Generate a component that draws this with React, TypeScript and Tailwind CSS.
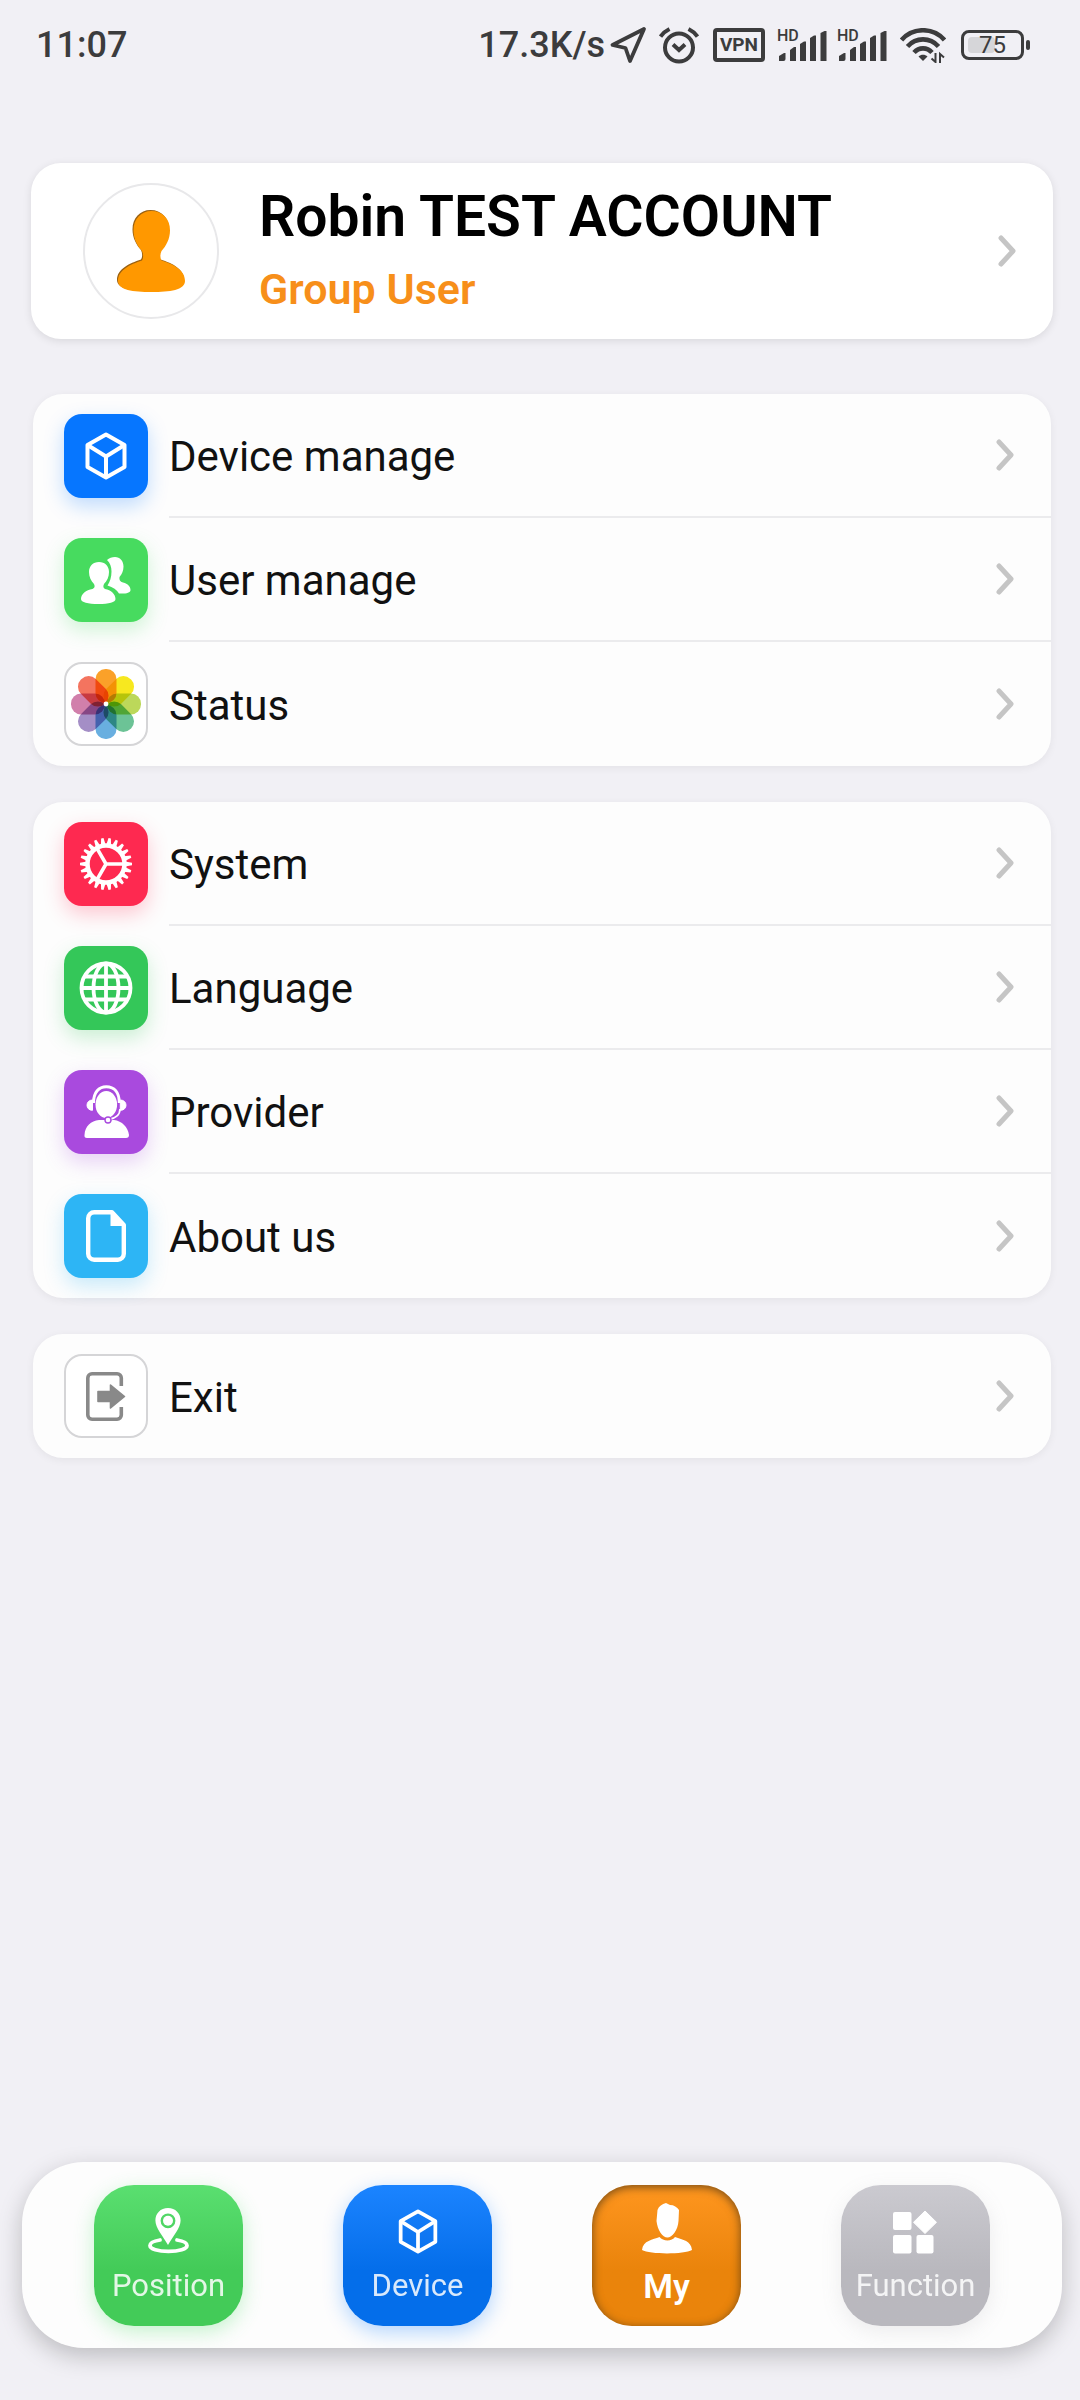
import type { ReactNode } from "react";
import clsx from "clsx";

function Chevron() {
  return (
    <svg width="18" height="32" viewBox="0 0 18 32" fill="none" className="shrink-0 text-[#c5c5c5]">
      <path d="M3 3 L15 16 L3 29" stroke="currentColor" strokeWidth="5" strokeLinecap="round" strokeLinejoin="round" />
    </svg>
  );
}

function BoxIcon({ className }: { className: string }) {
  return (
    <svg viewBox="0 0 42 48" fill="none" stroke="currentColor" strokeWidth="4" strokeLinejoin="round" className={className}>
      <path d="M21 2.5 L39.5 13 V35 L21 45.5 L2.5 35 V13 Z" />
      <path d="M2.5 13 L21 24.5 L39.5 13 M21 24.5 V45" />
    </svg>
  );
}

function UsersIcon() {
  return (
    <svg width="50" height="47" viewBox="0 0 50 47" fill="currentColor">
      <path d="M18 5 C24 5 28 9 28 15 C28 20 26 24 23 27 C22 29 22 31 24 32 C30 33 34.5 37 34.5 42 C34.5 45.5 28 47 17.5 47 C7 47 0 45.5 0 42 C0 37 5 33 11.5 32 C14 31 14 29 13 27 C10 24 8 20 8 15 C8 9 12 5 18 5 Z" />
      <path d="M26 3 C28 1 31 0 34 0 C39 0 42.5 4 42.5 9.5 C42.5 14 41 17 38.5 20 C38 23 39 24.5 42 25.5 C47 27 49.5 29.5 49.5 33 C49.5 36 44 37 38 36.5 C36 33 32 30 26.5 28.5 C29 25 30.5 20 30.5 14.5 C30.5 9.5 29 6 26 3 Z" />
    </svg>
  );
}

const petals = ["#fba129", "#f7e81f", "#bcd85a", "#6cc396", "#69afe0", "#a48ec6", "#d17fab", "#f4745f"];

function FlowerIcon() {
  return (
    <svg width="72" height="72" viewBox="-36 -36 72 72" className="isolate">
      {petals.map((color, i) => (
        <rect
          key={color}
          x="-10.5"
          y="-35"
          width="21"
          height="34"
          rx="10"
          fill={color}
          transform={`rotate(${i * 45})`}
          className="mix-blend-multiply"
        />
      ))}
      <circle r="2.4" fill="#fff" />
    </svg>
  );
}

const teeth = Array.from({ length: 22 }, (_, i) => (i * 360) / 22);

function GearIcon() {
  return (
    <svg width="54" height="54" viewBox="-27 -27 54 54" fill="none" stroke="currentColor">
      <circle r="18.5" strokeWidth="4.5" />
      {teeth.map((angle) => (
        <path key={angle} d="M19 -2.4 L26 -1.2 V1.2 L19 2.4 Z" fill="currentColor" stroke="none" transform={`rotate(${angle})`} />
      ))}
      <path d="M0 0 H18 M0 0 L-9 -15.6 M0 0 L-9 15.6" strokeWidth="3.6" />
    </svg>
  );
}

function GlobeIcon() {
  return (
    <svg width="54" height="54" viewBox="-27 -27 54 54" fill="none" stroke="currentColor" strokeWidth="3.8">
      <circle r="24.5" />
      <ellipse rx="12.5" ry="24.5" />
      <path d="M0 -25 V25 M-25 0 H25 M-22 -11.5 H22 M-22 11.5 H22" />
    </svg>
  );
}

function AgentIcon() {
  return (
    <svg width="45" height="54" viewBox="0 0 45 54" fill="none">
      <path d="M0.5 50 C1 41 7 36 15 35 H30 C38 36 44 42 45 50 Q45 53 42 53 H3 Q0 53 0.5 50 Z" fill="currentColor" />
      <ellipse cx="22.3" cy="19.5" rx="10.8" ry="13.6" fill="currentColor" />
      <path d="M34 25 C34 30 30 33.5 25 34.5" stroke="#a94ade" strokeWidth="3" />
      <path d="M9.5 18 C9.5 7 15 1.7 22.3 1.7 C30 1.7 35.3 7 35.3 18" stroke="currentColor" strokeWidth="3" />
      <path d="M36 24 C36 30 31 33.5 25 34.5" stroke="currentColor" strokeWidth="1.8" />
      <path d="M8.5 15 C5 15 3 17.5 3 20.2 C3 23 5 25.3 8.5 25.3 Z M36.3 15 C40 15 42 17.5 42 20.2 C42 23 40 25.3 36.3 25.3 Z" fill="currentColor" stroke="currentColor" />
      <circle cx="24" cy="35" r="3" fill="currentColor" stroke="#a94ade" strokeWidth="1.4" />
    </svg>
  );
}

function FileIcon() {
  return (
    <svg width="40" height="52" viewBox="0 0 40 52" fill="none">
      <path
        d="M26 2.2 H8.2 A6 6 0 0 0 2.2 8.2 V43.8 A6 6 0 0 0 8.2 49.8 H31.8 A6 6 0 0 0 37.8 43.8 V15 Z"
        stroke="currentColor"
        strokeWidth="4.4"
        strokeLinejoin="round"
      />
      <path d="M24.5 3 V16 H38 L27 3 Z" fill="currentColor" />
    </svg>
  );
}

function ExitIcon() {
  return (
    <svg width="40" height="49" viewBox="0 0 40 49" fill="none" className="text-[#898989]">
      <path
        d="M35.3 14 V6 A4.2 4.2 0 0 0 31.1 1.8 H6 A4.2 4.2 0 0 0 1.8 6 V43 A4.2 4.2 0 0 0 6 47.2 H31.1 A4.2 4.2 0 0 0 35.3 43 V35"
        stroke="currentColor"
        strokeWidth="3.6"
      />
      <path d="M12 19.5 H24.5 V13 L38.5 24.5 L24.5 36 V29.5 H12 Z" fill="currentColor" stroke="currentColor" strokeWidth="1.6" strokeLinejoin="round" />
    </svg>
  );
}

function PinIcon() {
  return (
    <svg width="41" height="46" viewBox="0 0 41 46" fill="none" stroke="currentColor">
      <path
        d="M20 0 C27.5 0 32.6 5.5 32.6 12.5 C32.6 20 25 28 20 37 C15 28 7.4 20 7.4 12.5 C7.4 5.5 12.5 0 20 0 Z M20 5.4 A7.4 7.4 0 1 0 20 20.2 A7.4 7.4 0 1 0 20 5.4 Z"
        fill="currentColor"
        fillRule="evenodd"
        stroke="none"
      />
      <circle cx="20" cy="12.8" r="5" fill="currentColor" stroke="none" />
      <path d="M12 32 C6 33 2 35 2 37.5 C2 41 10 43.4 20.5 43.4 C31 43.4 39 41 39 37.5 C39 35 35 33 29 32" strokeWidth="3.8" strokeLinecap="round" />
    </svg>
  );
}

function PersonIcon() {
  return (
    <svg width="50" height="51" viewBox="0 0 50 51" fill="currentColor">
      <path d="M15.5 7 C17 3 20 1 24 0 L28 2 C32 2 35 4 37 7 L36.5 18 C36 27 30 34.5 25.5 34.5 C20.5 34.5 15.5 27 14.5 18 Z" />
      <path d="M17.5 34 C21 38.5 30 38.5 33 34 C41 37 49 37.5 50 47 C42 51.5 8 51.5 0 47 C1 37.5 11 36.5 17.5 34 Z" />
    </svg>
  );
}

function AppsIcon() {
  return (
    <svg width="45" height="44" viewBox="0 0 45 44" fill="currentColor">
      <rect y="2" width="18.5" height="18" rx="2" />
      <rect y="25" width="18.5" height="18.5" rx="2" />
      <rect x="23.5" y="25" width="17" height="18.5" rx="2" />
      <path d="M32 1 L43.5 12.3 L32 23.5 L20.5 12.3 Z" stroke="currentColor" strokeLinejoin="round" />
    </svg>
  );
}

function AvatarIcon() {
  const d =
    "M33.5 0 C44.5 0 52 8 52 19.5 C52 28 48 35 43.5 40 C42 43 42 47 43.5 49.5 C56 53.5 67 59 67 70 C67 79 52 81 33.5 81 C15 81 0 79 0 70 C0 59 12 53.5 24 49.5 C25.5 47 25.5 43 24 40 C19.5 35 15.5 28 15.5 19.5 C15.5 8 23 0 33.5 0 Z";
  return (
    <svg width="69" height="83" viewBox="0 0 69 83">
      <path d={d} fill="#9a6112" />
      <path d={d} fill="#ff9800" transform="translate(1 1)" />
    </svg>
  );
}

function SignalIcon() {
  return (
    <div className="relative h-8 w-[50px]">
      <span className="absolute -top-px left-0 text-[16px] leading-4 font-medium">HD</span>
      <svg width="50" height="32" viewBox="0 0 50 32" fill="currentColor">
        <path d="M2 32 V27 L7 24 H8.5 V30 Q8.5 32 6.5 32 Z" />
        <path d="M13 32 V21 L17 18 H19 V32 Z" />
        <path d="M23 32 V15 L27 12.5 H29 V32 Z" />
        <path d="M33 32 V9 L37 6.5 H39 V32 Z" />
        <path d="M43.5 32 V4 L47.5 2 H49.5 V32 Z" />
      </svg>
    </div>
  );
}

function StatusBar() {
  return (
    <header className="flex h-[90px] items-center pr-[50px] pl-9 text-[#3c3c3d]">
      <span className="text-[36px] leading-[46px] font-medium">11:07</span>
      <div className="ml-auto flex items-center">
        <span className="text-[36px] leading-[46px] font-medium">17.3K/s</span>
        <svg width="38" height="38" viewBox="0 0 38 38" fill="none" className="ml-1">
          <path d="M35 3 L3.5 19 L16.5 22 L21 35 Z" stroke="currentColor" strokeWidth="3.8" strokeLinejoin="round" />
        </svg>
        <svg width="40" height="37" viewBox="0 0 40 37" fill="none" stroke="currentColor" className="ml-3">
          <circle cx="20" cy="20.5" r="14" strokeWidth="4" />
          <path d="M1.5 9.5 C4 6 6.5 4 10.5 2 M38.5 9.5 C36 6 33.5 4 29.5 2" strokeWidth="4" />
          <path d="M14 17.5 L20 23 L26 17.5" strokeWidth="4" />
        </svg>
        <span className="ml-[14px] flex h-[34px] w-[52px] items-center justify-center rounded-sm border-4 border-current text-[19px] leading-5 font-bold">
          VPN
        </span>
        <div className="ml-3 flex gap-[10px]">
          <SignalIcon />
          <SignalIcon />
        </div>
        <svg width="46" height="35" viewBox="0 0 46 35" fill="none" stroke="currentColor" className="ml-[13px]">
          <path d="M1.5 12 C13 -1 33 -1 44.5 12" strokeWidth="4.6" />
          <path d="M7.5 18.5 C16 9 30 9 38.5 18.5" strokeWidth="4.6" />
          <path d="M14 24.5 C19 19 27 19 32 24.5" strokeWidth="4.6" />
          <path d="M23 33 L18.5 28.5 C21 26 25 26 27.5 28.5 Z" fill="currentColor" stroke="none" />
          <path d="M35.5 25 V34 L31.5 30.5 M40 35 V26 L44 29.5" strokeWidth="2" />
        </svg>
        <div className="ml-[15px] flex items-center gap-[2px]">
          <span className="relative flex h-[30px] w-[63px] items-center justify-center rounded-lg border-3 border-current text-[24px] leading-6">
            <span className="absolute inset-y-1 left-1 w-[27px] rounded-sm bg-[#d6d6d9]" />
            <span className="relative">75</span>
          </span>
          <span className="h-[10px] w-1 rounded-sm bg-current" />
        </div>
      </div>
    </header>
  );
}

type Item = { label: string; icon: ReactNode; tile: string };

const groups: Item[][] = [
  [
    { label: "Device manage", icon: <BoxIcon className="h-12 w-[42px]" />, tile: "bg-[#0676ff] shadow-[0_8px_20px_rgba(6,118,255,0.25)]" },
    { label: "User manage", icon: <UsersIcon />, tile: "bg-[#47db5f] shadow-[0_8px_20px_rgba(71,219,95,0.25)]" },
    { label: "Status", icon: <FlowerIcon />, tile: "border-2 border-[#d5d5d7] bg-white" },
  ],
  [
    { label: "System", icon: <GearIcon />, tile: "bg-[#fe2950] shadow-[0_8px_20px_rgba(254,41,80,0.25)]" },
    { label: "Language", icon: <GlobeIcon />, tile: "bg-[#34c759] shadow-[0_8px_20px_rgba(52,199,89,0.25)]" },
    { label: "Provider", icon: <AgentIcon />, tile: "bg-[#a94ade] shadow-[0_8px_20px_rgba(169,74,222,0.25)]" },
    { label: "About us", icon: <FileIcon />, tile: "bg-[#2db5f5] shadow-[0_8px_20px_rgba(45,181,245,0.25)]" },
  ],
  [{ label: "Exit", icon: <ExitIcon />, tile: "border-2 border-[#d5d5d7] bg-white" }],
];

function MenuRow({ item, last }: { item: Item; last: boolean }) {
  return (
    <li>
      <button type="button" className="flex h-[124px] w-full items-center gap-[21px] pl-[31px] text-left">
        <span className={clsx("flex size-[84px] shrink-0 items-center justify-center rounded-[18px] text-white", item.tile)}>
          {item.icon}
        </span>
        <span className={clsx("flex flex-1 items-center justify-between self-stretch pr-[37px]", !last && "border-b-2 border-[#ebebed]")}>
          <span className="pt-1 text-[42px] leading-[50px] text-[#111]">{item.label}</span>
          <Chevron />
        </span>
      </button>
    </li>
  );
}

const tabs = [
  {
    label: "Position",
    icon: <PinIcon />,
    style: "from-[#5adf70] to-[#43cb58] text-white shadow-[0_6px_20px_rgba(71,219,95,0.3)]",
  },
  {
    label: "Device",
    icon: <BoxIcon className="h-[45px] w-10" />,
    style: "from-[#1b84ff] to-[#046eea] text-white shadow-[0_6px_20px_rgba(6,118,255,0.3)]",
  },
  {
    label: "My",
    icon: <PersonIcon />,
    active: true,
    style: "from-[#ff961e] to-[#ea840b] text-white shadow-[inset_0_2px_10px_rgba(70,50,20,0.75)]",
  },
  {
    label: "Function",
    icon: <AppsIcon />,
    style: "from-[#cbcad0] to-[#b9b8be] text-white shadow-[0_6px_20px_rgba(142,142,147,0.15)]",
  },
];

export default function App() {
  return (
    <div className="flex min-h-screen flex-col bg-[#f1f0f5] font-['Roboto',sans-serif]">
      <StatusBar />

      <main className="flex flex-col pt-[73px] pb-9">
        <button
          type="button"
          className="mr-[27px] ml-[31px] flex h-[176px] items-center rounded-[30px] bg-white pr-[37px] pl-[52px] text-left shadow-[0_2px_8px_rgba(0,0,0,0.1)]"
        >
          <span className="flex size-[136px] shrink-0 items-center justify-center rounded-full border-2 border-[#e8e8ea]">
            <AvatarIcon />
          </span>
          <span className="ml-10 flex flex-1 flex-col pt-1">
            <span className="text-[57px] leading-[72px] font-semibold text-black">Robin TEST ACCOUNT</span>
            <span className="text-[43px] leading-[72px] font-semibold text-[#f78f1a]">Group User</span>
          </span>
          <Chevron />
        </button>

        <div className="mt-[55px] mr-[29px] ml-[33px] flex flex-col gap-9">
          {groups.map((items) => (
            <ul key={items[0].label} className="rounded-[30px] bg-[#fdfdfd] shadow-[0_2px_8px_rgba(0,0,0,0.06)]">
              {items.map((item, i) => (
                <MenuRow key={item.label} item={item} last={i === items.length - 1} />
              ))}
            </ul>
          ))}
        </div>
      </main>

      <nav className="mt-auto mr-[18px] mb-[52px] ml-[22px] flex h-[186px] items-center justify-between rounded-[62px] bg-[#fdfdfd] px-[72px] shadow-[0_8px_24px_rgba(0,0,0,0.22)]">
        {tabs.map((tab) => (
          <button
            key={tab.label}
            type="button"
            className={clsx("flex h-[141px] w-[149px] flex-col items-center gap-3 rounded-[40px] bg-linear-to-b to-60% pt-[19px]", tab.style)}
          >
            <span className="flex h-[50px] items-end">{tab.icon}</span>
            <span className={clsx("leading-[40px]", tab.active ? "text-[34px] font-semibold" : "text-[31px] opacity-85")}>{tab.label}</span>
          </button>
        ))}
      </nav>
    </div>
  );
}
